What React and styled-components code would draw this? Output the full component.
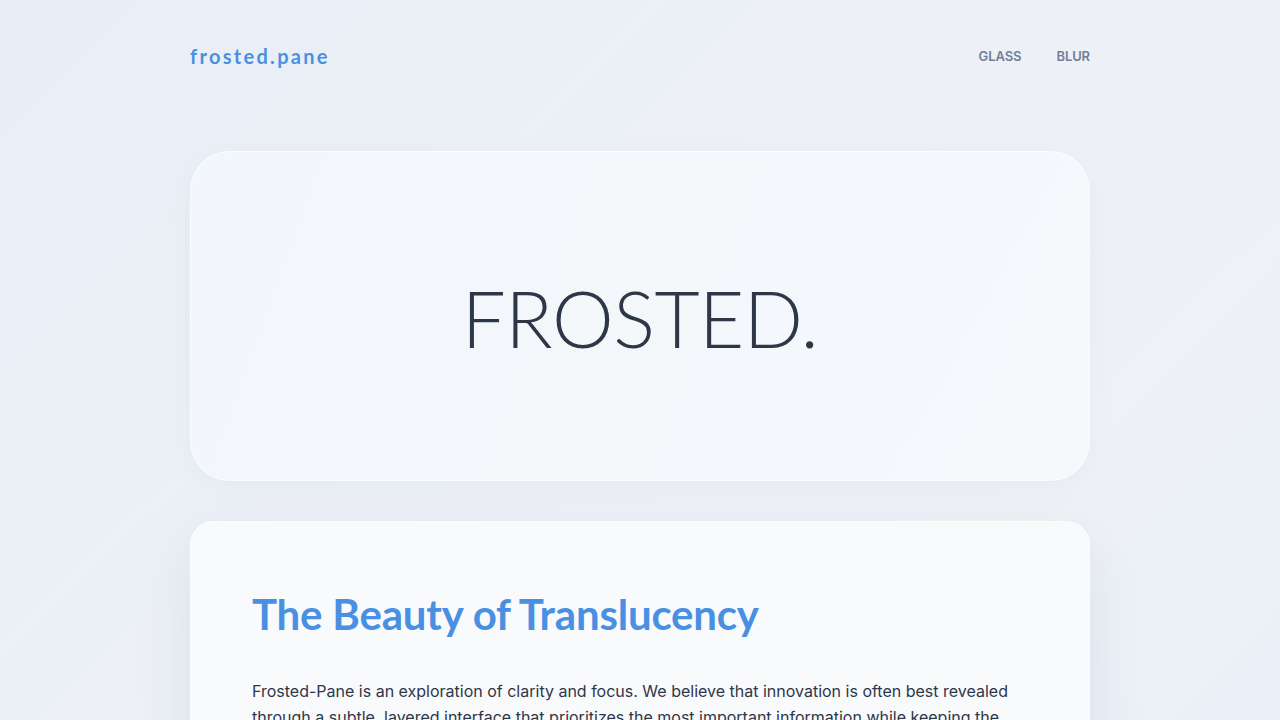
import React from "react";
import styled, { createGlobalStyle } from "styled-components";

const GlobalStyle = createGlobalStyle`
  html, body {
    margin: 0;
    padding: 0;
  }
  body {
    min-height: 100vh;
    background: linear-gradient(135deg, #e8eef7 0%, #edf1f6 45%, #eef2f6 70%, #e9eff9 100%);
    font-family: Inter, "Liberation Sans", sans-serif;
    color: #2d3748;
  }
`;

const Page = styled.div`
  width: 900px;
  margin: 0 auto;
  padding: 41px 0 80px;
`;

const Header = styled.header`
  display: flex;
  justify-content: space-between;
  align-items: center;
  height: 30px;
  margin-bottom: 80px;
`;

const Logo = styled.div`
  font-family: Lato, "Noto Sans", sans-serif;
  font-size: 20px;
  font-weight: 700;
  letter-spacing: 2.3px;
  color: #4a90e2;
`;

const Nav = styled.nav`
  display: flex;
  gap: 35px;
`;

const NavLink = styled.a`
  font-size: 13px;
  font-weight: 600;
  letter-spacing: -0.1px;
  color: #718096;
  text-transform: uppercase;
  text-decoration: none;
  cursor: pointer;
`;

const Hero = styled.section`
  height: 330px;
  box-sizing: border-box;
  border-radius: 40px;
  background: linear-gradient(110deg, rgba(243, 246, 250, 0.95) 0%, rgba(244, 247, 251, 0.95) 60%, rgba(246, 248, 251, 0.95) 100%);
  border: 1px solid rgba(255, 255, 255, 0.6);
  box-shadow: 0 8px 32px rgba(31, 38, 135, 0.03);
  display: flex;
  align-items: center;
  justify-content: center;
`;

const HeroTitle = styled.h1`
  margin: 4px 0 0;
  font-family: Lato, "Noto Sans", sans-serif;
  font-size: 78px;
  font-weight: 300;
  letter-spacing: -0.5px;
  color: #2d3748;
`;

const Card = styled.section`
  margin-top: 40px;
  border-radius: 24px;
  padding: 60px 61px;
  background: rgba(249, 250, 252, 0.97);
  border: 1px solid rgba(255, 255, 255, 0.7);
  box-shadow: 0 20px 60px rgba(31, 38, 80, 0.08);
`;

const CardTitle = styled.h2`
  margin: 7px 0 40px;
  font-family: Lato, "Noto Sans", sans-serif;
  font-size: 42px;
  font-weight: 700;
  letter-spacing: -0.2px;
  color: #4a90e2;
`;

const Text = styled.p`
  margin: 0;
  font-size: 16px;
  line-height: 1.6;
  color: #2d3748;
`;

export default function App() {
  return (
    <>
      <GlobalStyle />
      <Page>
        <Header>
          <Logo>frosted.pane</Logo>
          <Nav>
            <NavLink>Glass</NavLink>
            <NavLink>Blur</NavLink>
          </Nav>
        </Header>
        <Hero>
          <HeroTitle>FROSTED.</HeroTitle>
        </Hero>
        <Card>
          <CardTitle>The Beauty of Translucency</CardTitle>
          <Text>
            Frosted-Pane is an exploration of clarity and focus. We believe that innovation is often best revealed
            through a subtle, layered interface that prioritizes the most important information while keeping the
            surrounding context softly visible in the background.
          </Text>
        </Card>
      </Page>
    </>
  );
}
